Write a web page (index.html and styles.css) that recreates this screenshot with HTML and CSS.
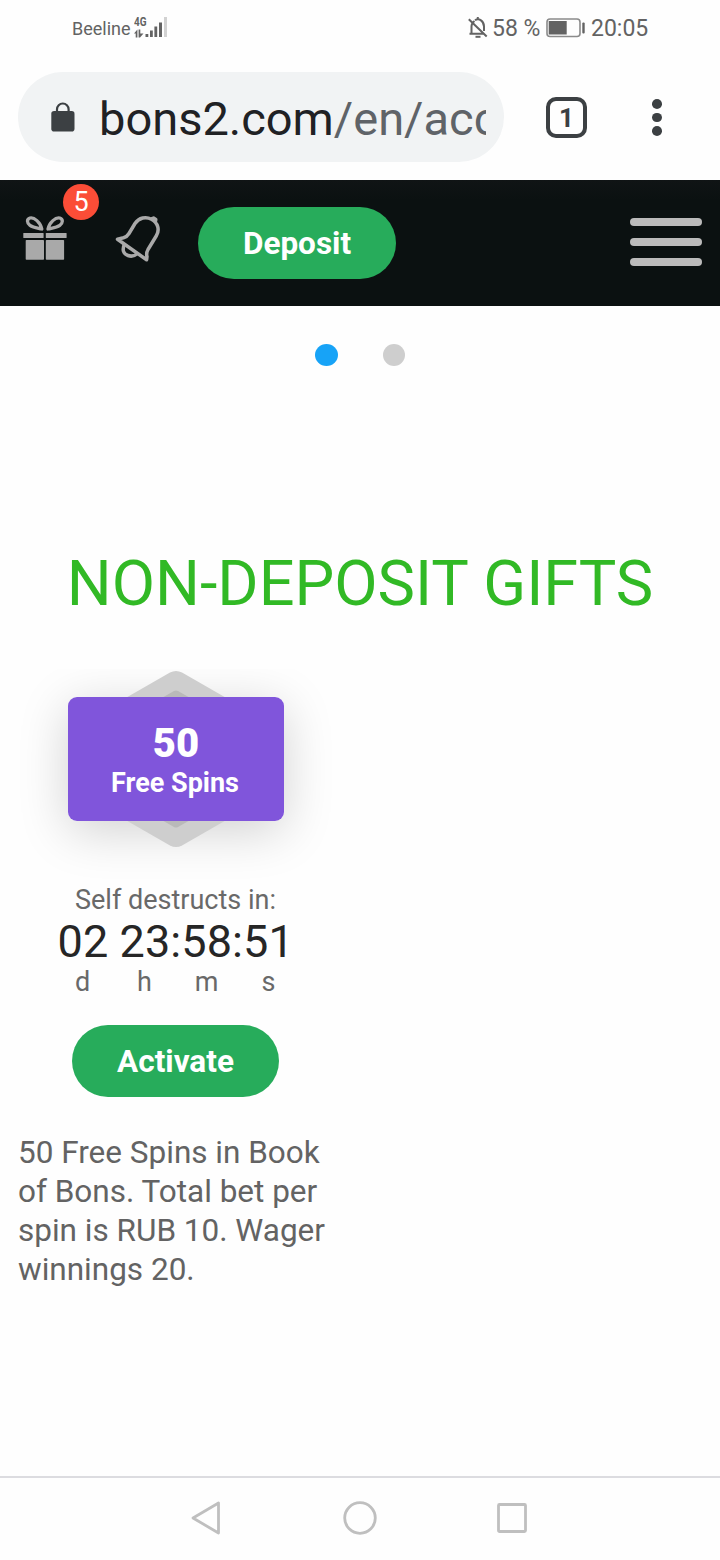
FILE: index.html
```html
<!DOCTYPE html>
<html lang="en">
<head>
<meta charset="utf-8">
<meta name="viewport" content="width=device-width, initial-scale=1">
<title>Gifts</title>
<link rel="stylesheet" href="styles.css">
</head>
<body>
<div class="phone">
  <div class="status">
    <span class="carrier">Beeline</span>
    <span class="network"><span class="gen">4G</span>
      <svg class="signal" width="34" height="22" viewBox="0 0 34 22"><g fill="#636363"><path d="M0 16.500 3.400 12.500v8H1.700v-4zM4.600 12.500h1.700v4h3.200L6 20.500H4.600z"/><rect x="11.500" y="17" width="2.800" height="3"/><rect x="16" y="13.500" width="2.800" height="6.500"/><rect x="20.400" y="9.500" width="2.800" height="10.500"/><rect x="25" y="5.500" width="3" height="14.500"/></g><rect x="30" y="0" width="3" height="20" fill="#d2d2d2"/></svg>
    </span>
    <svg class="mute" width="20" height="22" viewBox="0 0 20 22" fill="none" stroke="#636363" stroke-width="2"><path d="M3.500 16V9.500Q3.500 6 6.500 4M7 3.300Q10 1.200 13 3.400Q16 5.500 16 9.500V14M1.500 16.800H16M.8 2.200 18.700 19.500M9.800 0v3"/><path d="M7.500 19.800h5"/></svg>
    <span class="percent">58 %</span>
    <svg class="battery" width="39" height="20" viewBox="0 0 39 20"><rect x="1" y="1" width="33" height="17.500" rx="3" fill="none" stroke="#8b8b8b" stroke-width="1.600"/><rect x="2.700" y="3" width="18" height="13.500" fill="#636363"/><rect x="36.300" y="4.500" width="2.400" height="11" rx="1" fill="#636363"/></svg>
    <span class="clock">20:05</span>
  </div>
  <div class="browser">
    <div class="address">
      <svg class="lock" width="24" height="30" viewBox="0 0 24 30"><path d="M6 10V7.300a5.800 5.800 0 0 1 11.600 0V10" fill="none" stroke="#3c4043" stroke-width="2.200"/><rect x=".3" y="9" width="23.200" height="20.500" rx="2.800" fill="#3c4043"/></svg>
      <div class="url">bons2.com<span class="path">/en/acc</span></div>
    </div>
    <div class="tabs">1</div>
    <div class="more"><i></i><i></i><i></i></div>
  </div>
  <header class="topbar">
    <div class="gift">
      <svg width="44" height="45" viewBox="0 0 44 45" fill="#a9a9a9"><rect x=".3" y="17" width="20.300" height="5" rx=".6"/><rect x="22.800" y="17" width="20.800" height="5" rx=".6"/><rect x="2.700" y="24" width="18.300" height="19.700" rx=".7"/><rect x="22.800" y="24" width="18.300" height="19.700" rx=".7"/><g fill="none" stroke="#a9a9a9" stroke-width="3.300" stroke-linejoin="round"><path d="M18.800 13C17.500 6.500 11 .9 7 2C3.500 3.200 3.800 7 7 9.300C10.500 11.800 15 12 18.800 13Z"/><path d="M25 13C26.300 6.500 32.800 .9 36.800 2C40.300 3.200 40 7 36.800 9.300C33.300 11.800 28.800 12 25 13Z"/></g></svg>
      <span class="badge">5</span>
    </div>
    <svg class="bell" width="46" height="48" viewBox="0 0 46 48" fill="none" stroke="#a9a9a9" stroke-width="3.500" stroke-linejoin="round"><path d="M2.500 24.200L8.500 22.800Q12 21.800 14 18.500L20 8.500C24 2.500 31 1.300 36.500 4.300C43 8 44.800 14.500 41.500 20.500L33 34.500Q31 38 32 41.500L31.600 44.800Z"/><path d="M9.500 29C6.800 35 8.500 39 13 40.500Q18 42.400 22.500 38.500"/><path d="M36.500 3.800 38.500 3 40.800 4.500 40.300 7" fill="#a9a9a9"/></svg>
    <button class="button deposit">Deposit</button>
    <div class="menu"><i></i><i></i><i></i></div>
  </header>
  <main class="content">
    <div class="dots"><i class="active"></i><i></i></div>
    <h1>NON-DEPOSIT GIFTS</h1>
    <section class="card">
      <div class="prize">
        <div class="label"><strong>50</strong><span>Free Spins</span></div>
        <svg class="hexagon" width="160" height="178" viewBox="0 0 160 178"><path d="M74 2.600Q80-.4 86 2.600L153 41Q158 44 158 50V128Q158 134 153 137L86 175.400Q80 178.400 74 175.400L7 137Q2 134 2 128V50Q2 44 7 41Z" fill="#cecece"/><path d="M78 21Q80 20 82 21L138 53V125L82 157Q80 158 78 157L22 125V53Z" fill="#b9b9b9"/></svg>
      </div>
      <div class="note">Self destructs in:</div>
      <div class="timer">02 23:58:51</div>
      <div class="units"><span>d</span><span>h</span><span>m</span><span>s</span></div>
      <button class="button activate">Activate</button>
      <p>50 Free Spins in Book<br>of Bons. Total bet per<br>spin is RUB 10. Wager<br>winnings 20.</p>
    </section>
  </main>
  <nav class="navbar">
    <svg width="32" height="36" viewBox="0 0 32 36"><path d="M28.500 3v30L3 18Z"/></svg>
    <svg class="home" width="36" height="36" viewBox="0 0 36 36"><circle cx="18" cy="18" r="15.300"/></svg>
    <svg width="32" height="36" viewBox="0 0 32 36"><rect x="2.500" y="4.500" width="27" height="27" rx="1"/></svg>
  </nav>
</div>
</body>
</html>
```
FILE: styles.css
```css
* { box-sizing: border-box; }
body { margin: 0; background: #fefefe; font-family: Roboto, sans-serif; }
svg { display: block; flex: none; }
i { display: block; }
.phone { width: 720px; height: 1560px; display: flex; flex-direction: column; overflow: hidden; }
.status { height: 60px; padding: 0 70px 4px 72px; display: flex; align-items: center; color: #636363; white-space: nowrap; font-size: 23px; }
.carrier { font-size: 18px; width: 62px; }
.network { position: relative; width: 34px; height: 22px; }
.gen { position: absolute; left: 0; top: -1px; font-size: 12px; line-height: 13px; font-weight: 700; transform: scaleX(.83); transform-origin: left; }
.mute { margin-left: auto; }
.percent { margin-left: 4px; width: 55px; }
.battery { margin-left: -1px; }
.clock { margin-left: 6px; width: 59px; }
.browser { height: 120px; flex: none; padding: 12px 0 18px 18px; display: flex; }
.address { width: 486px; height: 90px; border-radius: 45px; background: #f1f3f4; display: flex; align-items: center; padding-left: 33px; }
.lock { margin-top: -1px; }
.url { width: 387px; margin-left: 24px; overflow: hidden; white-space: nowrap; font-size: 47px; line-height: 60px; letter-spacing: 0; color: #202124; padding-top: 3px; }
.path { color: #5f6368; }
.tabs { width: 41px; height: 41px; margin: 25px 0 0 42px; border: 4.500px solid #3c4043; border-radius: 10px; font-size: 26px; line-height: 34px; font-weight: 700; text-align: center; color: #3c4043; }
.more { margin: 27px 0 0 65px; display: flex; flex-direction: column; gap: 4px; }
.more i { width: 10px; height: 9.500px; border-radius: 50%; background: #3c4043; }
.topbar { height: 126px; flex: none; background: linear-gradient(#101415, #0b1111 20px); display: flex; align-items: flex-start; padding-left: 23px; }
.gift { position: relative; margin-top: 36px; }
.badge { position: absolute; left: 40px; top: -32px; width: 36px; height: 36px; border-radius: 50%; background: #fb4d37; color: #fff; font-size: 27px; line-height: 36px; text-align: center; }
.bell { margin: 35px 0 0 48px; }
.button { border: 0; border-radius: 36px; height: 72px; padding: 2px 0 0; font: 700 31.500px/70px Roboto, sans-serif; color: #fff; background: #27ac5b; }
.deposit { width: 198px; margin: 27px 0 0 37px; }
.menu { margin: 37px 18px 0 auto; padding-top: .5px; display: flex; flex-direction: column; gap: 12px; }
.menu i { width: 72px; height: 8.300px; border-radius: 4px; background: #bbb; }
.content { flex: 1; }
.dots { display: flex; gap: 45px; padding: 38px 0 0 315px; }
.dots i { width: 22px; height: 22px; border-radius: 50%; background: #cecece; }
.dots .active { width: 23px; background: #17a3f7; }
h1 { margin: 182px 0 0; text-align: center; font-size: 63px; line-height: 72px; font-weight: 400; color: #31b925; white-space: nowrap; }
.card { width: 350px; margin-top: 49px; }
.prize { height: 214px; padding: 28px 0 0 68px; position: relative; overflow: hidden; isolation: isolate; }
.hexagon { position: absolute; left: 96px; top: 1px; z-index: -1; }
.label { width: 216px; height: 124px; border-radius: 9px; background: #8055db; color: #fff; display: flex; flex-direction: column; align-items: center; font-weight: 700; }
.prize::before { content: ""; position: absolute; z-index: -2; left: 68px; top: 28px; width: 216px; height: 124px; border-radius: 9px; box-shadow: 0 10px 50px rgba(0,0,0,.18); }
.label strong { font-size: 40px; line-height: 44px; margin-top: 25px; }
.label span { font-size: 27px; line-height: 32px; margin: 1px 2px 0 0; }
.note { height: 36px; padding: 1px 0 0 1px; text-align: center; font-size: 27px; line-height: 32px; color: #696969; }
.timer { padding-left: 57.500px; font-size: 45px; line-height: 46px; letter-spacing: .1px; color: #262626; white-space: nowrap; }
.units { display: grid; grid-template-columns: repeat(4, 62px); padding: 1px 0 0 51.500px; text-align: center; font-size: 27px; line-height: 32px; color: #696969; }
.activate { display: block; width: 207px; margin: 27px 0 0 72px; }
.card p { margin: 36px 0 0 18px; font-size: 31.500px; line-height: 39px; color: #636363; white-space: nowrap; }
.navbar { height: 84px; flex: none; border-top: 2px solid #dcdce0; padding: 22px 192px 0 190px; display: flex; justify-content: space-between; }
.navbar svg { fill: none; stroke: #bfbfbf; stroke-width: 2.800; stroke-linejoin: round; }
.navbar .home { margin-left: 2px; }
```
